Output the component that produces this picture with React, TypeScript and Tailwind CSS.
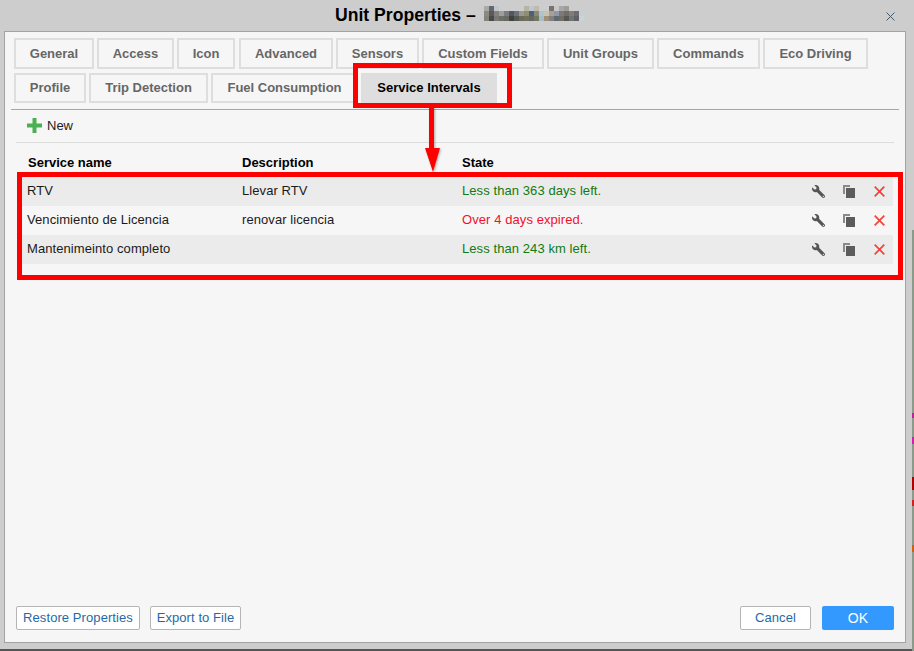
import { FaWrench } from "react-icons/fa";

const row1 = [
  ["General", "w-[80px]"],
  ["Access", "w-[77px]"],
  ["Icon", "w-[58px] mr-[1px]"],
  ["Advanced", "w-[94px]"],
  ["Sensors", "w-[83px]"],
  ["Custom Fields", "w-[122px]"],
  ["Unit Groups", "w-[107px]"],
  ["Commands", "w-[103px]"],
  ["Eco Driving", "w-[105px]"],
];
const row2 = [
  ["Profile", "w-[72px]"],
  ["Trip Detection", "w-[119px]"],
  ["Fuel Consumption", "w-[147px]"],
];
const rows = [
  { name: "RTV", desc: "Llevar RTV", state: "Less than 363 days left.", color: "text-[#117a11]", bg: "bg-[#ebebeb]" },
  { name: "Vencimiento de Licencia", desc: "renovar licencia", state: "Over 4 days expired.", color: "text-[#f0102c]", bg: "bg-[#f6f6f6]" },
  { name: "Mantenimeinto completo", desc: "", state: "Less than 243 km left.", color: "text-[#117a11]", bg: "bg-[#ebebeb]" },
];
const blur = [
  ["#a9a9a5", "#636870", "#c0c6ca", "#cdcdcd", "#cdcdcd", "#cdcdcd", "#cdcdcd", "#cdcdcd", "#b7b4a4", "#bcc8d0", "#bdbaae", "#cdcdcd", "#cdcdcd", "#777470", "#c8c8c4", "#a8a6a6", "#a09c9a", "#cdcdcd", "#cdcdcd", "#cdcdcd"],
  ["#8b8a80", "#5b5a58", "#87817d", "#99a0a0", "#7a7c80", "#555560", "#6d7078", "#9a9a8c", "#8e8e78", "#4f6070", "#8a8a78", "#b0c4d0", "#c8c4b4", "#a8a098", "#9098a8", "#7c7a78", "#706c6a", "#7e7e7a", "#6c6c70", "#c4d0d8"],
  ["#85847a", "#4a4a48", "#7c7876", "#6a7068", "#666a60", "#424040", "#555a50", "#6a6a5a", "#70705c", "#606860", "#707860", "#a8bcc8", "#a09078", "#808080", "#606870", "#706c68", "#585454", "#707470", "#606064", "#c8d4dc"],
];

function Tab({ label, w }: { label: string; w: string }) {
  return (
    <div className={`${w} h-full shrink-0 flex items-center justify-center border-2 border-[#dedede] text-[13px] font-bold text-[#666]`}>
      {label}
    </div>
  );
}

function Copy() {
  return (
    <svg width="12" height="13" viewBox="0 0 12 13">
      <path d="M0 0h7v2H2v7H0z" fill="#8a8a8a" />
      <rect x="3" y="3" width="9" height="10" fill="#5c5c5c" />
    </svg>
  );
}

function Cross() {
  return (
    <svg width="11" height="11" viewBox="0 0 11 11">
      <path d="M.7.7l9.6 9.6M10.3.7L.7 10.3" stroke="#f44336" strokeWidth="1.7" fill="none" />
    </svg>
  );
}

export default function App() {
  return (
    <div className="relative w-[914px] h-[651px] overflow-hidden bg-[#cdcdcd] font-['Liberation_Sans',Arial,sans-serif]">
      <div className="relative h-[31px] flex items-center pl-[335px]">
        <span className="text-[17.6px] font-bold text-black">Unit Properties –</span>
        <svg width="100" height="15" viewBox="0 0 100 15" className="ml-[8px] self-start mt-[6px]">
          {blur.map((r, y) =>
            r.map((c, x) => <rect key={`${x}-${y}`} x={x * 5} y={y * 5} width="5" height="5" fill={c} />)
          )}
        </svg>
        <svg width="9" height="9" viewBox="0 0 9 9" className="absolute left-[886px] top-[12px]">
          <path d="M.5.5l8 8M8.5.5l-8 8" stroke="#44586c" strokeWidth="1" fill="none" />
        </svg>
      </div>

      <div className="relative ml-[4px] w-[902px] h-[612px] bg-[#f6f6f6] border border-[#a3a3a3] flex flex-col">
        <div className="flex flex-col gap-[4px] pl-[9px] pt-[6px]">
          <div className="flex gap-[3px] h-[31px]">
            {row1.map(([l, w]) => (
              <Tab key={l} label={l} w={w} />
            ))}
          </div>
          <div className="flex gap-[3px] h-[30px]">
            {row2.map(([l, w]) => (
              <Tab key={l} label={l} w={w} />
            ))}
            <div className="w-[136px] h-full flex items-center justify-center bg-[#dedede] text-[13px] font-bold text-black">
              Service Intervals
            </div>
          </div>
        </div>

        <div className="mx-[6px] mt-[6px] border-t border-[#a6a6a6]" />

        <div className="mx-[11px] h-[33px] flex items-center pl-[11px] pb-[1px] gap-[5px] border-b border-[#dcdcdc] text-[13px] text-[#222]">
          <svg width="15" height="15" viewBox="0 0 15 15">
            <path d="M5.5 0h4v5.5H15v4H9.5V15h-4V9.5H0v-4h5.5z" fill="#4caf50" />
          </svg>
          <span>New</span>
        </div>

        <div className="ml-[23px] h-[34px] pt-[6px] flex items-center text-[13px] font-bold text-black">
          <div className="w-[214px]">Service name</div>
          <div className="w-[220px]">Description</div>
          <div>State</div>
        </div>

        <div className="ml-[17px] mr-[12px] flex flex-col">
          {rows.map((r) => (
            <div key={r.name} className={`h-[29px] flex items-center pl-[5px] text-[13px] tracking-[0.08px] text-[#1a1a1a] ${r.bg}`}>
              <div className="w-[215px] pb-[1px]">{r.name}</div>
              <div className="w-[220px] pb-[1px]">{r.desc}</div>
              <div className={`w-[349px] pb-[1px] ${r.color}`}>{r.state}</div>
              <div className="w-[32px] pl-[1px] flex justify-start">
                <FaWrench size={13} className="text-[#555] -scale-x-100" />
              </div>
              <div className="w-[31px] flex justify-start">
                <Copy />
              </div>
              <Cross />
            </div>
          ))}
        </div>

        <div className="mt-auto mb-[12px] mx-[11px] flex items-center text-[13px] tracking-[0.08px]">
          <button className="h-[24px] w-[124px] bg-white border border-[#b5b5b5] rounded-[2px] text-[#1f6aa5]">Restore Properties</button>
          <button className="ml-[10px] h-[24px] w-[91px] bg-white border border-[#b5b5b5] rounded-[2px] text-[#1f6aa5]">Export to File</button>
          <button className="ml-auto h-[24px] w-[71px] bg-white border border-[#b5b5b5] rounded-[2px] text-[#1f6aa5]">Cancel</button>
          <button className="ml-[11px] h-[24px] w-[72px] bg-[#3399ff] rounded-[2px] text-white text-[14px]">OK</button>
        </div>
      </div>

      {/* page visible behind the dialog */}
      <div className="absolute left-0 right-0 bottom-0 h-[2px] bg-[#555]" />
      <div className="absolute right-0 top-[230px] bottom-0 w-[2px] bg-[#8b9a8a]">
        <div className="absolute top-[183px] h-[5px] w-full bg-[#c020a0]" />
        <div className="absolute top-[207px] h-[7px] w-full bg-[#d020b0]" />
        <div className="absolute top-[247px] h-[13px] w-full bg-[#b00000]" />
        <div className="absolute top-[270px] h-[6px] w-full bg-[#d02020]" />
        <div className="absolute top-[315px] h-[7px] w-full bg-[#d06010]" />
      </div>

      {/* red annotations */}
      <div className="absolute left-[353px] top-[63px] w-[159px] h-[45px] border-[5px] border-[#ff0000]" />
      <div className="absolute left-[17px] top-[172px] w-[886px] h-[108px] border-[5px] border-[#ff0000]" />
      <svg width="20" height="67" viewBox="0 0 20 67" className="absolute left-[424px] top-[107px] drop-shadow-[1px_1px_1px_rgba(0,0,0,0.3)]">
        <path d="M5 0h5v41h6l-7 24-8-24h4z" fill="#ff0000" />
      </svg>
    </div>
  );
}
